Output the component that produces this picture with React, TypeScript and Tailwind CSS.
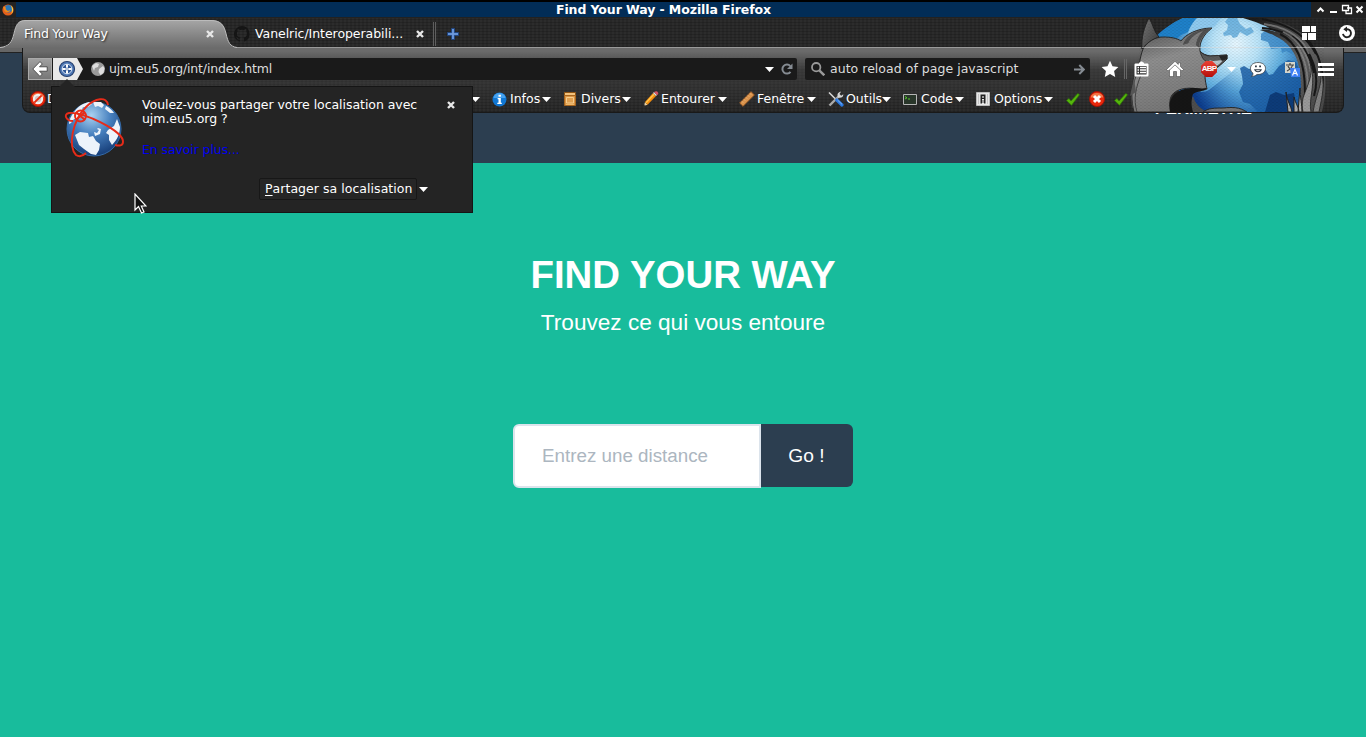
import type { ReactNode } from "react";

const weave =
  "bg-[repeating-linear-gradient(0deg,rgba(0,0,0,0.16)_0px,rgba(0,0,0,0.16)_1px,transparent_1px,transparent_3px),repeating-linear-gradient(90deg,rgba(255,255,255,0.025)_0px,rgba(255,255,255,0.025)_2px,transparent_2px,transparent_4px)]";

function Caret({ className = "" }: { className?: string }) {
  return (
    <svg className={"shrink-0 " + className} width="9" height="5" viewBox="0 0 9 5">
      <path d="M0 0h9L4.500 5z" fill="#fff" />
    </svg>
  );
}

function Cross() {
  return (
    <svg width="8" height="8" viewBox="0 0 8 8" className="shrink-0">
      <path d="M1 1l6 6M7 1L1 7" stroke="#e8e8e8" strokeWidth="2.4" />
    </svg>
  );
}

function FirefoxIcon() {
  return (
    <svg width="12" height="12" viewBox="0 0 12 12">
      <circle cx="6" cy="6" r="5.6" fill="#e5601b" />
      <circle cx="6.4" cy="4.8" r="3.8" fill="#2a78b8" />
      <path d="M1 2.500C2 3 3 3 4 3.500L3.600 5l1.600 1.400c1 .5 2 .2 3-.4C8 8.500 4 9 2.500 7z" fill="#f08a1c" />
      <path d="M9 1.500c2.500 2 2.800 6 .5 8.500.8-3 .6-6-.5-8.500z" fill="#ffd43c" />
    </svg>
  );
}

function FoxArtwork() {
  return (
    <svg className="absolute left-[1120px] top-[18px] rounded-br-lg" width="224" height="94" viewBox="1120 18 224 94">
      <defs>
        <radialGradient id="globe" gradientUnits="userSpaceOnUse" cx="1236" cy="44" r="76">
          <stop offset="0" stopColor="#e6f6fe" />
          <stop offset=".3" stopColor="#b9e3f8" />
          <stop offset=".62" stopColor="#63b0e0" />
          <stop offset="1" stopColor="#1a5ca6" />
        </radialGradient>
        <linearGradient id="deep" gradientUnits="userSpaceOnUse" x1="1200" y1="104" x2="1245" y2="78">
          <stop offset="0" stopColor="#0c3c8c" />
          <stop offset="1" stopColor="#3f93d2" stopOpacity="0" />
        </linearGradient>
        <linearGradient id="fur" gradientUnits="userSpaceOnUse" x1="1160" y1="34" x2="1180" y2="112">
          <stop offset="0" stopColor="#646464" />
          <stop offset=".3" stopColor="#8d8d8d" />
          <stop offset="1" stopColor="#747474" />
        </linearGradient>
        <linearGradient id="earL" x1="0" y1="0" x2="1" y2="1">
          <stop offset="0" stopColor="#757575" />
          <stop offset="1" stopColor="#3a3a3a" />
        </linearGradient>
        <linearGradient id="tail" gradientUnits="userSpaceOnUse" x1="1255" y1="20" x2="1330" y2="105">
          <stop offset="0" stopColor="#1c1c1c" />
          <stop offset=".5" stopColor="#606060" />
          <stop offset="1" stopColor="#474747" />
        </linearGradient>
        <pattern id="mesh" width="4" height="3" patternUnits="userSpaceOnUse">
          <path d="M0 .5h2M2 2h2" stroke="#000" strokeOpacity=".07" />
        </pattern>
      </defs>

      <path d="M1154 38C1162 30 1172 23 1183 18h80c20 8 34 22 38 40 4 19 2 40-2 54h-115l-14-60z" fill="url(#globe)" />
      <path d="M1155 38c7-8 17-15 28-20h18c-7 4-11 8-13 14-8 3-12 6-14 12z" fill="#1e80c8" />
      <path d="M1197 18h24l-6 8-14 8-13 0c2-7 4-11 9-16z" fill="#8ec9ee" />
      <path d="M1228 18h9l3 6 6 5 5-2 3 5-7 4-7-4-3 5-4 1-2-3-7 1-1-3 4-3 1-5-3-3z" fill="#5fa9d9" fillOpacity=".8" />
      <path d="M1261 34l4-3 17 4 10 9 5 8-5 2-6-3-4 2-1-5-10 1-3-7-7-2z" fill="#3b87c6" fillOpacity=".8" />
      <path d="M1192 88c6 6 13 4 17 2l30-24 8 46h-55z" fill="url(#deep)" />
      <path d="M1240 68l4-2 5 3 9-3 7 3 4 6 4-1 6-8 9-6 8 2 4 10v40h-42l-8-8-7-2-4-10 4-8-1-8z" fill="#1c5fa6" fillOpacity=".85" />
      <path d="M1270 95l6-3 8 3 10-2 3 19h-32z" fill="#0d3b78" />

      <path d="M1142 49c-1-11 2-22 7-31 4 6 5 14 10 19-6 2-12 6-17 12z" fill="url(#earL)" stroke="#222" />
      <path
        d="M1143 49c4-7 12-12 20-12 7 0 14 1 18 4 4-6 16-13 31-13-9 7-13 15-12 23 2 3 6 4 10 5 6 0 11-1 17-1l0 4c-3 3-6 5-9 8l-13 9c0 4 1 8 2 13l-4 1c-14-4-32-2-33 11-1 5 1 8 2 11h-38c-3-12-3-22 0-36 1-4 4-8 5-11 1-5 2-11 4-16z"
        fill="url(#fur)"
        stroke="#2b2b2b"
      />
      <path d="M1183 45c2-9 14-16 29-17-9 6-13 13-13 20-4-5-9-6-16-3z" fill="#505050" />
      <path d="M1188 44c2-6 8-11 15-13-5 5-7 10-7 15z" fill="#7d7d7d" />
      <path d="M1200 51c2 3 6 5 10 5 6 0 11-1 17-1v4c-3 3-6 5-9 8l-6-5c-5 2-10-2-12-11z" fill="#5a5a5a" stroke="#2b2b2b" strokeWidth=".8" />
      <path d="M1209 60c5 2 9 0 14 0-2 3-5 5-8 7z" fill="#b9c4ca" />
      <path d="M1219 56l8-1v4l-5 2z" fill="#262626" />
      <path d="M1170 112c-3-16 8-24 24-24 4 0 8 1 13 0-3 4-10 3-14 6-3 7 2 13 6 18z" fill="#151515" />
      <path d="M1193 112c-2-7-2-12 0-16 2 8 8 13 14 16z" fill="#4d4d4d" />
      <path d="M1203 112c5-4 12-4 20-4 10-1 16-1 24 4z" fill="#777" stroke="#292929" />
      <path d="M1133 108c-3-11-1-20 3-32M1137 112c-4-13-1-25 4-37" stroke="#444" fill="none" />
      <path d="M1130 96l4-18 2 14z" fill="#555" />

      <path
        d="M1243 18h20c30 4 53 20 61 51 3 15 1 30-2 43h-25c5-14 5-30 2-45-3-15-12-26-24-31-5-3-10-4-15-6 6-1 11 0 16 2-8-6-20-10-33-14z"
        fill="url(#tail)"
      />
      <path
        d="M1262 19c26 5 44 16 54 35M1262 28c26 2 45 13 52 45M1280 34c19 9 28 35 24 78M1292 36c22 14 28 40 22 60M1306 38c14 14 20 38 15 55"
        fill="none"
        stroke="#171717"
        strokeWidth="2"
      />
      <path
        d="M1264 24c22 3 38 13 45 30M1283 32c17 8 26 24 28 42M1297 46c11 16 12 36 10 60"
        fill="none"
        stroke="#8c8c8c"
        strokeOpacity=".7"
        strokeWidth="1.800"
      />
      <path d="M1310 62c4 12-3 24-7 36-1 5-1 10 0 14h8c-3-14 6-28-1-50z" fill="#989898" stroke="#222" strokeWidth=".8" />
      <path d="M1320 68c4 14-4 26-7 44h6c3-16 7-28 1-44z" fill="#808080" stroke="#222" strokeWidth=".8" />
      <path d="M1286 92c1 9 5 14 6 20h-4zM1294 97c1 6 5 10 5 15h-5zM1300 88c0 9 2 16 2 24h-4z" fill="#aaa" stroke="#222" />
      <path d="M1142 47.500h182" stroke="#ddd" strokeOpacity=".55" />
      <path d="M1142 18h182v94h-190z" fill="url(#mesh)" />
    </svg>
  );
}

function Star() {
  return (
    <svg width="18" height="18" viewBox="0 0 18 18">
      <path d="M9 .8l2.500 5.400 5.900.7-4.300 4.100 1.100 5.900L9 14l-5.200 2.900 1.100-5.900L.6 6.900l5.900-.7z" fill="#fff" />
    </svg>
  );
}

function Clipboard() {
  return (
    <svg width="15" height="16" viewBox="0 0 15 16">
      <path d="M5 1.500h1C6 0 9 0 9 1.500h1v1h3.500q1 0 1 1v11q0 1-1 1h-12q-1 0-1-1v-11q0-1 1-1H5z" fill="#fff" />
      <path d="M2.500 5h10v8.500h-10z" fill="#333" />
      <path d="M3.500 6.500h1.500M6 6.500h6M3.500 9h1.500M6 9h6M3.500 11.500h1.500M6 11.500h6" stroke="#fff" strokeWidth="1.300" />
    </svg>
  );
}

function House() {
  return (
    <svg width="16" height="16" viewBox="0 0 16 16" className="overflow-visible">
      <path
        d="M8 .3L-.5 8.500 1 10l1.500-1.300v6.900h4V10.500h3v5.100h4V8.700L15 10l1.500-1.500L13.500 5.600V1.800h-2.200v1.700z"
        fill="#fff"
        stroke="#333"
        strokeWidth=".5"
      />
      <path d="M2.700 8.900L8 3.900l5.300 5" fill="none" stroke="#555" strokeWidth=".7" />
    </svg>
  );
}

function Abp() {
  return (
    <span className="flex h-4 w-4 items-center justify-center bg-linear-to-b from-[#ea4034] to-[#b50b08] font-['Liberation_Sans'] text-[8px] leading-none font-bold tracking-[-0.8px] text-white [clip-path:polygon(30%_0,70%_0,100%_30%,100%_70%,70%_100%,30%_100%,0_70%,0_30%)]">
      ABP
    </span>
  );
}

function Chat() {
  return (
    <svg width="16" height="15" viewBox="0 0 16 15" className="overflow-visible">
      <path
        d="M8 .5c4.300 0 7.500 2.300 7.500 5.800S12.300 12.500 8 12.500l-1-.1C5.500 13.800 4 14.200 1.500 14.300c1.100-.8 1.600-1.900 1.500-3.100C1.400 10.100.5 8.500.5 6.300.5 2.800 3.700.5 8 .5z"
        fill="#fff"
        stroke="#333"
        strokeWidth=".7"
      />
      <path d="M5 3.500h1.800v1.800H5zM9.200 3.500H11v1.800H9.200z" fill="#2f3a45" />
      <path d="M4 7.200h8c-.6 2-2 3-4 3s-3.400-1-4-3z" fill="#2f3a45" />
      <path d="M5.800 8.200h4.400c-.5.700-1.200 1-2.200 1s-1.700-.3-2.200-1z" fill="#fff" />
    </svg>
  );
}

function Translate() {
  return (
    <svg width="15" height="15" viewBox="0 0 15 15">
      <path d="M0 0h10v11H0z" fill="#d5d5cc" />
      <path d="M1 3h8M5 1v2M7.500 3C7 6 4 8 2 9M3 4c.5 2 3 4 5 4" stroke="#444" fill="none" strokeWidth="1.200" />
      <path d="M5 6h10v9H6z" fill="#3f80f5" />
      <path d="M7.500 13.500L10 7.500l2.500 6M8.500 11.500h3" stroke="#fff" fill="none" strokeWidth="1.200" />
    </svg>
  );
}

function Stop({ kind }: { kind: "slash" | "cross" }) {
  return (
    <svg width="16" height="16" viewBox="0 0 16 16" className="shrink-0">
      <circle cx="8" cy="8" r="7.500" fill="#e8280c" stroke="#a31205" />
      <path d="M1.600 6.500a6.500 5.600 0 0 1 12.800 0z" fill="#f47747" />
      {kind === "slash" ? (
        <>
          <circle cx="8" cy="8" r="5.200" fill="#f2f2f2" />
          <circle cx="8" cy="8" r="3.200" fill="#d8c8c4" />
          <path d="M4.300 11.700l7.400-7.400" stroke="#e8280c" strokeWidth="1.900" />
        </>
      ) : (
        <path d="M5 5l6 6M11 5l-6 6" stroke="#fff" strokeWidth="3" />
      )}
    </svg>
  );
}

function Check() {
  return (
    <svg width="14" height="13" viewBox="0 0 14 13" className="shrink-0">
      <path d="M.5 7.500l2.500-2 2 2.500L11.800.5l1.700 1.200L5.500 12.300z" fill="#56b50c" stroke="#2f7d05" strokeWidth=".7" />
    </svg>
  );
}

const infoIcon = (
  <svg width="15" height="15" viewBox="0 0 15 15">
    <circle cx="7.500" cy="7.500" r="7" fill="#1177d3" />
    <path d="M1.500 6a6 5 0 0 1 12 0z" fill="#45a1ee" />
    <path d="M6.500 2.700h2.400v2.100H6.500zM5.600 6h3.200v4.700h1v1.300H5.300v-1.300h1.200V7.300h-.9z" fill="#fff" />
  </svg>
);
const boxIcon = (
  <svg width="14" height="14" viewBox="0 0 14 14">
    <path d="M1.500.500h11v3h-11z" fill="#f3c27c" stroke="#8f5413" />
    <path d="M1.500 3.500h11v10h-11z" fill="#d99343" stroke="#a8661f" />
    <path d="M3.500 5.500h7v5.500h-7z" stroke="#f6cd8c" fill="#e0a050" />
    <path d="M3 12.500h8" stroke="#f0b869" />
  </svg>
);
const pencilIcon = (
  <svg width="16" height="16" viewBox="0 0 16 16">
    <path d="M1 15l1-4 2.500 2.700z" fill="#e9cfa0" />
    <path d="M2 11l8-9 3 3-8.500 8.700z" fill="#f28c0d" />
    <path d="M3 11.800l8-8.500" stroke="#ffc64e" strokeWidth="1.300" />
    <path d="M10 2l1-1 3 3-1 1z" fill="#ddd" />
    <path d="M11 1q3-1.500 4 .5t-1 2.500z" fill="#d75163" />
    <path d="M1 15l.5-1.500 1 1z" fill="#222" />
  </svg>
);
const rulerIcon = (
  <svg width="16" height="16" viewBox="0 0 16 16">
    <path d="M.7 12L12 .7l3.300 3.300L4 15.300z" fill="#d8924c" stroke="#a2622a" />
    <path d="M3 10.500l1 1M5 8.500l1 1M7 6.500l1 1M9 4.500l1 1M11 2.500l1 1" stroke="#f4c58c" />
  </svg>
);
const toolsIcon = (
  <svg width="16" height="16" viewBox="0 0 16 16">
    <path d="M1 1.500l8 8" stroke="#d9d9d9" strokeWidth="1.600" />
    <path d="M1.500 14.500l9-9" stroke="#aaa" strokeWidth="2.400" />
    <path d="M8.800 9l5.200 5" stroke="#2c79e0" strokeWidth="3.200" strokeLinecap="round" />
    <path d="M9.500 9l4.500 4.300" stroke="#8bbcf5" strokeWidth=".9" />
    <path d="M10 6.500C8.500 3 10.500.8 13 .8L11.500 3l1.700 1.700 2.100-1.500C15.500 6 13 7.500 10 6.500z" fill="#d6d6d6" />
  </svg>
);
const codeIcon = (
  <svg width="14" height="11" viewBox="0 0 14 11">
    <path d="M.5.500h13v10H.5z" fill="#29362a" stroke="#b5b5b5" />
    <path d="M2 2.500l2 1.300L2 5M5 5h2" stroke="#55ca2d" fill="none" />
  </svg>
);
const optionsIcon = (
  <svg width="14" height="14" viewBox="0 0 14 14">
    <path d="M.5.500h13v13H.5z" fill="#e8e8e8" stroke="#bbb" />
    <path d="M4.500 2.500h5v9h-1.500V7H6v4.500H4.500z" fill="#222" />
    <path d="M6 4h2v2H6zM6 8h2v3H6z" fill="#999" />
    <path d="M2.500 2v10M11.500 2v10" stroke="#c4c4c4" />
  </svg>
);

function DevMenu({ icon, label, className }: { icon: ReactNode; label: string; className: string }) {
  return (
    <div className={"flex shrink-0 items-center " + className}>
      <span className="flex w-[18px] shrink-0 items-center justify-start">{icon}</span>
      <span className="grow whitespace-nowrap">{label}</span>
      <Caret />
    </div>
  );
}

function TitleBar() {
  return (
    <div className="flex h-[18px] border-t-2 border-black bg-[#222] pb-px">
      <div className="flex w-4 items-center justify-center">
        <FirefoxIcon />
      </div>
      <div className="flex w-[1295px] items-center justify-center bg-[#022d57] pt-px text-[12.5px] leading-none font-bold text-white">
        <span className="tracking-[-0.09px]">Find Your Way - Mozilla Firefox</span>
      </div>
      <svg width="55" height="15" viewBox="0 0 55 15">
        <g fill="none" stroke="#fff" strokeWidth="2">
          <path d="M6.500 9.500l3-3 3 3M19 10h7" />
          <path d="M31.500 3.500h6v5h-6zM36 6h4.500v5.500H35V9" strokeWidth="1.300" />
          <path d="M45.500 4.500l6 6M51.500 4.500l-6 6" />
        </g>
      </svg>
    </div>
  );
}

function TabStrip() {
  return (
    <div className={"flex h-[30px] border-b border-[#999] bg-[#272727] pt-[2px] text-[12.5px] leading-[30px] text-white " + weave}>
      <svg className="absolute left-0 top-5" width="242" height="28" viewBox="0 0 242 28">
        <defs>
          <linearGradient id="tab" x1="0" y1="0" x2="0" y2="1">
            <stop offset="0" stopColor="#a6a6a6" />
            <stop offset="1" stopColor="#6b6b6b" />
          </linearGradient>
        </defs>
        <path d="M0 28c9-1 12-5 14-14 2-9 4-14 12-14h185c10 0 13 5 15 13 2 9 4 14 11 15z" fill="url(#tab)" />
        <path d="M0 27.500c9-1 12-5 14-14 2-9 4-13 12-13h185c10 0 13 5 15 13 2 9 4 13 11 14" fill="none" stroke="#bbb" />
      </svg>
      <div className="relative flex w-[231px] items-center pl-6 [text-shadow:1px_1px_2px_#222]">
        <span className="w-[182px] tracking-[-0.25px]">Find Your Way</span>
        <Cross />
      </div>
      <div className="relative flex w-[205px] items-center pl-[3px]">
        <svg width="16" height="16" viewBox="0 0 16 16">
          <path
            fill="#151515"
            d="M8 0a8 8 0 0 0-2.500 15.600c.4.100.5-.2.500-.4v-1.500c-2.200.5-2.700-1-2.700-1-.4-.9-.9-1.200-.9-1.200-.7-.5.100-.5.100-.5.800.1 1.200.8 1.200.8.700 1.200 1.900.9 2.300.7.100-.5.300-.9.500-1.100-1.800-.2-3.600-.9-3.600-4 0-.9.300-1.600.8-2.200-.1-.2-.4-1 .1-2.100 0 0 .7-.2 2.200.8a7.600 7.600 0 0 1 4 0c1.500-1 2.200-.8 2.200-.8.400 1.100.2 1.900.1 2.100.5.600.8 1.300.8 2.200 0 3.100-1.900 3.700-3.700 3.900.3.300.6.800.6 1.500v2.200c0 .2.100.5.500.4A8 8 0 0 0 8 0z"
          />
        </svg>
        <span className="ml-[5px] w-[161px] tracking-[-0.05px]">Vanelric/Interoperabili...</span>
        <Cross />
        <span className="ml-auto h-6 w-[3px] border-x border-[#5e5e5e]" />
      </div>
      <svg className="ml-[11px] mt-[8px]" width="12" height="12" viewBox="0 0 12 12">
        <path d="M4.500.5h3v4h4v3h-4v4h-3v-4h-4v-3h4z" fill="#5988d0" stroke="#20457e" />
        <path d="M6 1v10M1 6h10" stroke="#7aa3e2" strokeWidth=".8" />
      </svg>
      <div className="relative z-10 mr-[11px] -mt-px ml-auto flex items-center gap-[23px]">
        <svg width="14" height="14" viewBox="0 0 14 14">
          <path d="M0 0h8v6H0zM9 0h5v6H9zM0 7h5v7H0zM6 7h8v7H6z" fill="#fff" />
        </svg>
        <svg width="16" height="16" viewBox="0 0 16 16">
          <circle cx="8" cy="8" r="8" fill="#fff" />
          <path d="M7 4.300a4 4 0 1 1-3 4.500" fill="none" stroke="#222" strokeWidth="1.900" />
          <path d="M8 1.500v5.600L4.300 4.300z" fill="#222" />
        </svg>
      </div>
    </div>
  );
}

function NavBar() {
  return (
    <div className="relative flex h-[22px] items-center text-[12.5px] leading-[22px] text-[#ddd]">
      <div className="flex h-[22px] w-6 items-center justify-center border border-[#aaa] bg-linear-to-b from-[#a0a0a0] to-[#777]">
        <svg width="16" height="16" viewBox="0 0 16 16">
          <path d="M8 .6L.8 8 8 15.400l2.300-2.400-2.800-2.800H15.200V5.800H7.500L10.300 3z" fill="#fff" stroke="#333" strokeWidth=".8" />
        </svg>
      </div>
      <div className="flex h-full w-[745px] items-center rounded-r-xs bg-[#1a1a1a]">
        <svg width="32" height="22" viewBox="0 0 32 22">
          <path d="M1 0h24l6 11-6 11H1z" fill="#e9e9e9" />
          <circle cx="15" cy="11" r="7.500" fill="#4f79b6" stroke="#243f70" strokeWidth="1.200" />
          <circle cx="15" cy="11" r="4.800" fill="#2f5796" stroke="#dbe6f5" strokeWidth="1" />
          <path d="M15 6.500v3M15 12.500v3M10.500 11h3M16.500 11h3" stroke="#fff" strokeWidth="2" />
          <path d="M15 9v4M13 11h4" stroke="#fff" strokeWidth=".8" />
        </svg>
        <svg className="ml-[7px]" width="14" height="14" viewBox="0 0 14 14">
          <circle cx="7" cy="7" r="7" fill="#999" />
          <path d="M1 4l4-3 3 1-1 3-3 1-1 3zM8 7l4-3 1.500 2-1 5-3 2-2-3z" fill="#dedede" />
        </svg>
        <span className="ml-[4px] w-[656px] tracking-[-0.15px]">ujm.eu5.org/int/index.html</span>
        <Caret />
        <svg className="ml-[7px]" width="12" height="12" viewBox="0 0 12 12">
          <path d="M9.500 8.800A4.500 4.500 0 1 1 9.300 3.100" fill="none" stroke="#858b92" strokeWidth="2" />
          <path d="M11.500.5v5.500H6z" fill="#858b92" />
        </svg>
      </div>
      <div className="ml-2 flex h-full w-[285px] items-center rounded-xs bg-[#1a1a1a] pl-[6px]">
        <svg width="14" height="14" viewBox="0 0 14 14">
          <circle cx="5.200" cy="5.200" r="4.200" fill="none" stroke="#999" strokeWidth="1.800" />
          <path d="M8.300 8.300l5 5" stroke="#999" strokeWidth="2.500" />
        </svg>
        <span className="ml-[5px] w-[244px] tracking-[0.03px]">auto reload of page javascript</span>
        <svg width="11" height="11" viewBox="0 0 11 11">
          <path d="M0 5.500h9.500M5.300 1l4.500 4.500L5.300 10" fill="none" stroke="#858b92" strokeWidth="2" />
        </svg>
      </div>
      <div className="ml-[11px] flex w-[18px]"><Star /></div>
      <div className="ml-[5px] h-5 w-[3px] border-x border-[#666]" />
      <div className="ml-[7px] flex"><Clipboard /></div>
      <div className="ml-[18px] flex"><House /></div>
      <div className="ml-[18px] flex"><Abp /></div>
      <Caret className="ml-[10px]" />
      <div className="ml-[14px] flex"><Chat /></div>
      <div className="ml-[19px] flex"><Translate /></div>
      <svg className="ml-[18px]" width="16" height="13" viewBox="0 0 16 13">
        <path d="M0 1.500h16M0 6.500h16M0 11.500h16" stroke="#fff" strokeWidth="3" />
      </svg>
    </div>
  );
}

function DevBar() {
  return (
    <div className="relative flex h-[26px] items-center text-[12.5px] text-white">
      <div className="ml-[2px] flex w-[441px] items-center">
        <Stop kind="slash" />
        <span className="ml-[1px]">D</span>
      </div>
      <Caret />
      <DevMenu className="ml-[12px] w-[59px]" icon={infoIcon} label="Infos" />
      <DevMenu className="ml-[12px] w-[68px]" icon={boxIcon} label="Divers" />
      <DevMenu className="ml-[12px] w-[84px]" icon={pencilIcon} label="Entourer" />
      <DevMenu className="ml-[12px] w-[77px]" icon={rulerIcon} label="Fenêtre" />
      <DevMenu className="ml-[12px] w-[63px]" icon={toolsIcon} label="Outils" />
      <DevMenu className="ml-[12px] w-[61px]" icon={codeIcon} label="Code" />
      <DevMenu className="ml-[12px] w-[77px]" icon={optionsIcon} label="Options" />
      <div className="ml-[13px] flex"><Check /></div>
      <div className="ml-[9px] flex"><Stop kind="cross" /></div>
      <div className="ml-[9px] flex"><Check /></div>
    </div>
  );
}

function LocationPopup() {
  return (
    <div className="absolute left-[51px] top-[86px] flex h-[127px] w-[422px] border border-[#151515] bg-[#242424] text-[12.5px] leading-[14px] text-white">
      <svg className="absolute left-[6px] top-[-8px]" width="18" height="9" viewBox="0 0 18 9">
        <path d="M0 9l9-9 9 9z" fill="#242424" />
      </svg>
      <svg className="ml-[11px] mt-[9px] shrink-0" width="62" height="64" viewBox="63 96 62 64">
        <defs>
          <radialGradient id="world" cx=".45" cy=".25" r=".8">
            <stop offset="0" stopColor="#a9d2f1" />
            <stop offset=".45" stopColor="#467fbe" />
            <stop offset="1" stopColor="#10356f" />
          </radialGradient>
        </defs>
        <circle cx="94" cy="129" r="27" fill="url(#world)" stroke="#356ba8" strokeWidth="1" />
        <path
          d="M75 111c3-5 9-8 14-9l3 2-4 3-5 0-2 4 1 4-3 4-5 0-3 4-2 1c0-5 3-9 6-13zM93 102l8 0 3 3-2 3-4-2-3 1zM106 106c4 2 6 4 8 7l-4 0-5-4zM108 130l6-4 3-7 3 8c0 7-3 13-8 18l-3-5 0-5-3-2zM75 135l5-3 8 1 1 4 4-1 3 5 4 3-1 6-3 5-5-1-7-5-5-4zM94 132l3 1 2-3-2-1 1-1 3 1-1 5-5 2z"
          fill="#edf3fa"
        />
        <g fill="none" stroke="#e72b19" strokeWidth="1.900">
          <path d="M108 105c-1-9-13-7-22 2-14 14-18 39-10 48 3 2 7 1 10-2" />
          <path d="M73 121c-7 0-10-7-4-8 13-2 55 18 54 29 0 4-4 4-8 3" />
          <circle cx="80.500" cy="116" r="5.500" />
          <path d="M76 112l9 8M85 112l-9 8" />
        </g>
      </svg>
      <div className="ml-[17px] mt-[11px] flex w-[309px] flex-col">
        <p className="tracking-[-0.05px] whitespace-nowrap">Voulez-vous partager votre localisation avec<br />ujm.eu5.org ?</p>
        <a className="mt-[17px] tracking-[-0.1px] text-[#0000ee]">En savoir plus...</a>
        <div className="ml-[117px] mt-[21px] flex items-center">
          <button className="flex h-[22px] w-[158px] items-center rounded-xs border border-[#171717] bg-[#262626] pl-[5px] tracking-[0.04px] whitespace-nowrap">
            <span className="underline underline-offset-2">P</span>artager sa localisation
          </button>
          <Caret className="ml-[2px]" />
        </div>
      </div>
      <div className="mt-[14px] ml-[-4px] h-2"><Cross /></div>
    </div>
  );
}

export default function App() {
  return (
    <div className="relative flex h-[737px] w-[1366px] flex-col overflow-hidden bg-[#18bc9c] font-['DejaVu_Sans',sans-serif]">
      <div className="flex h-[163px] shrink-0 flex-col bg-[#2c3e50]">
        <TitleBar />
        <TabStrip />
        <div className="h-[5px] shrink-0 border-b border-[#222] bg-[#666]" />
        <div className={"mx-[22px] -mt-[5px] h-[65px] shrink-0 rounded-b-lg border-x border-b border-[#191919] bg-[#262626] " + weave}>
          <div className="h-full rounded-b-lg bg-linear-to-b from-[#6b6b6b] from-5% via-[#4a4a4a88] via-35% to-[#22222200] pt-[10px] pl-[5px]">
            <FoxArtwork />
            <NavBar />
            <div className="mt-[6px]"><DevBar /></div>
          </div>
        </div>
        <div className="mr-[114px] -mt-[14px] self-end font-['Liberation_Sans',sans-serif] text-[16.7px] leading-5 font-bold text-white [clip-path:inset(14px_0_0_0)]">
          PERIMETRE
        </div>
      </div>
      <main className="flex flex-col items-center font-['Liberation_Sans',sans-serif] text-white">
        <h1 className="mt-[90px] text-[38.4px] leading-[44px] font-bold">FIND YOUR WAY</h1>
        <p className="mt-[12px] text-[22.6px] leading-[27px]">Trouvez ce qui vous entoure</p>
        <form className="mt-[88px] flex h-16">
          <div className="flex w-[248px] items-center rounded-l-md border-2 border-[#dce4ec] bg-white pl-[27px] text-[18.8px] text-[#acb6c0]">
            Entrez une distance
          </div>
          <div className="flex h-[63px] w-[92px] items-center justify-center rounded-r-md bg-[#2c3e50] pt-px pr-px text-[19.2px]">Go !</div>
        </form>
      </main>
      <LocationPopup />
      <svg className="absolute left-[134px] top-[193px]" width="13" height="21" viewBox="0 0 13 21">
        <path d="M1 1v16l3.500-3.500L7.500 20l2.500-1-2.700-6H12z" fill="#111" stroke="#fff" strokeWidth="1.200" />
      </svg>
    </div>
  );
}
